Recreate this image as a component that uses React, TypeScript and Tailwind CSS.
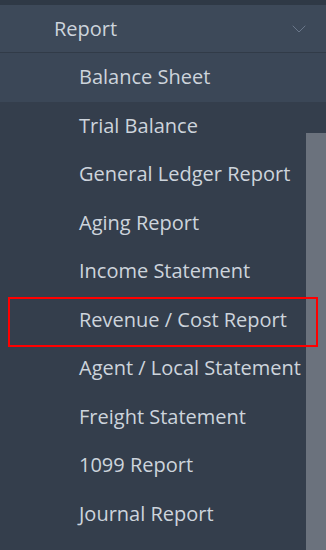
import React from 'react';
import { ChevronDown } from 'lucide-react';

const reports = [
  'Balance Sheet',
  'Trial Balance',
  'General Ledger Report',
  'Aging Report',
  'Income Statement',
  'Revenue / Cost Report',
  'Agent / Local Statement',
  'Freight Statement',
  '1099 Report',
  'Journal Report',
];

export default function App() {
  return (
    <div
      className="relative w-[326px] h-[550px] overflow-hidden bg-[#343e4c] text-[20px] text-[#cdd4dc]"
      style={{ fontFamily: '"Open Sans", "Liberation Sans", sans-serif' }}
    >
      <div className="h-[5px] bg-[#2f3946]" />

      {/* Parent item */}
      <div className="flex h-[48px] items-center justify-between bg-[#3d4959] pl-[54px] pr-[15px] border-b border-[#313b48]">
        <span>Report</span>
        <ChevronDown size={24} strokeWidth={1} className="text-[#6a778a]" />
      </div>

      {/* Sub items */}
      <ul>
        {reports.map((name, idx) => (
          <li
            key={name}
            className={`flex h-[48.5px] items-center pl-[79px] ${idx === 0 ? 'bg-[#3b4757]' : ''}`}
          >
            {name}
          </li>
        ))}
      </ul>

      {/* Scrollbar thumb */}
      <div className="absolute left-[306px] top-[133px] w-[20px] bottom-0 bg-[#6b727d]" />

      {/* Highlight annotation */}
      <div className="absolute left-[8px] top-[297px] w-[310px] h-[50px] border-2 border-[#ff0000]" />
    </div>
  );
}
